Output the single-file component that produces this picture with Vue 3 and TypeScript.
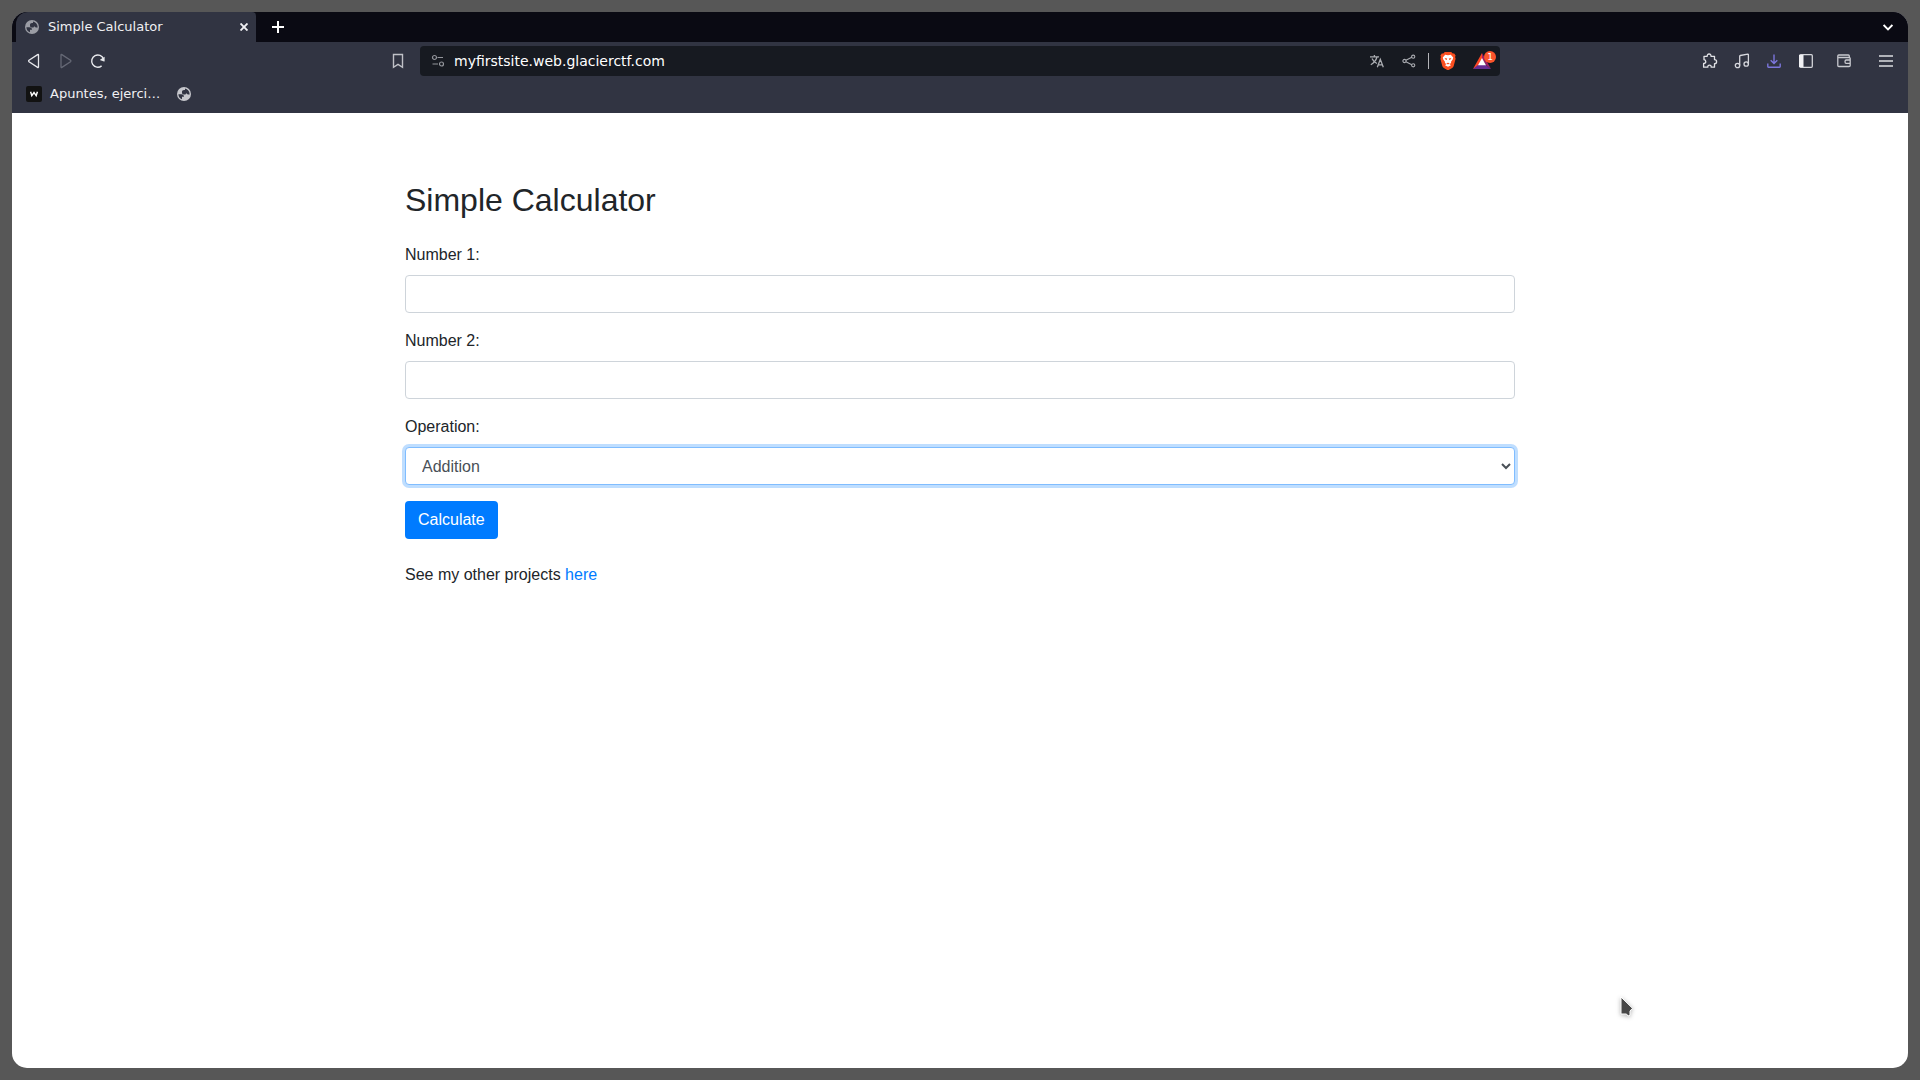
<script setup lang="ts">
import { ref } from 'vue'

const pageTitle = 'Simple Calculator'
const address = ref('myfirstsite.web.glacierctf.com')
const first = ref('')
const second = ref('')
const operation = ref('Addition')
const operations: string[] = ['Addition', 'Subtraction', 'Multiplication', 'Division']
const land =
  'M1.400 7.200h2.800c1.900 0 2.800.9 2.800 2.600H5v2.500C2.900 11.600 1.400 9.700 1.400 7.200zM5 5.500V4.800C5 3.700 5.800 3 7 3h1V1.500c2.700.5 4.600 2.700 4.600 5.500v.6h-1.200c-.7 0-1.300-.4-1.500-1C9 6.600 8.600 7 8.600 7.500H6.500c-.9 0-1.500-.8-1.500-2z'
</script>

<template>
  <div class="window">
    <header class="chrome">
      <div class="tabs">
        <div class="tab">
          <svg viewBox="0 0 14 14" width="14" height="14"><circle cx="7" cy="7" r="7" fill="#9b9da5" /><path :d="land" fill="#313442" /></svg>
          <span class="tab-title">{{ pageTitle }}</span>
          <button class="close" aria-label="Close tab">
            <svg viewBox="0 0 8 8" width="8" height="8"><path d="M.5.5l7 7M7.500.5l-7 7" stroke="#f1f1f4" stroke-width="1.900" /></svg>
          </button>
        </div>
        <button class="strip-btn" aria-label="New tab">
          <svg viewBox="0 0 12 12" width="12" height="12"><path d="M6 0v12M0 6h12" stroke="#fff" stroke-width="2" /></svg>
        </button>
        <button class="strip-btn search-tabs" aria-label="Search tabs">
          <svg viewBox="0 0 10 7" width="10" height="7"><path d="M.6 1L5 5.400 9.400 1" fill="none" stroke="#fff" stroke-width="1.900" /></svg>
        </button>
      </div>

      <div class="toolbar">
        <div class="nav">
          <button class="tool" aria-label="Back">
            <svg viewBox="0 0 14 16" width="14" height="16"><path d="M11.500 1.900v12.200q-.2.700-.9.300L2 8.700q-.8-.7 0-1.400l8.600-5.700q.7-.4.9.3z" fill="none" stroke="#e6e7eb" stroke-width="1.300" /></svg>
          </button>
          <button class="tool" aria-label="Forward" disabled>
            <svg viewBox="0 0 14 16" width="14" height="16"><path d="M2 1.900v12.200q.2.700.9.300L11.500 8.700q.8-.7 0-1.400L2.900 1.600q-.7-.4-.9.3z" fill="none" stroke="#656875" stroke-width="1.300" /></svg>
          </button>
          <button class="tool" aria-label="Reload">
            <svg viewBox="0 0 16 16" width="16" height="16"><path d="M11.600 12.900A6.100 6.100 0 1 1 13.500 6" fill="none" stroke="#e6e7eb" stroke-width="1.400" /><path d="M14.600 3.800v4.100q0 .6-.6.500l-3.600-1.100q-.6-.3-.1-.8z" fill="#e6e7eb" /></svg>
          </button>
          <button class="tool bookmark" aria-label="Bookmark this page">
            <svg viewBox="0 0 12 16" width="12" height="16"><path d="M1.500 1.500h9v12.800L6 11.400l-4.500 2.900z" fill="none" stroke="#c0c1c7" stroke-width="1.400" /></svg>
          </button>
        </div>

        <div class="address">
          <svg viewBox="0 0 14 14" width="14" height="14" fill="none" stroke="#93959b" stroke-width="1.200"><circle cx="3.500" cy="3.500" r="2" /><circle cx="10.500" cy="10" r="2" /><path d="M6.500 3.500H12M1.500 10H7" /></svg>
          <input v-model="address" aria-label="Address" spellcheck="false" />
          <button class="tool" aria-label="Translate">
            <svg viewBox="0 0 16 16" width="16" height="16" fill="none" stroke="#aaacb1" stroke-width="1.300"><path d="M1 3.800h9M5.400 2v1.800M1.800 11.800Q6.500 9 8 4M3 5.500q1.500 3.500 5 5M8.300 14.300l3-8 3 8M9.400 11.800h4" /></svg>
          </button>
          <button class="tool" aria-label="Share">
            <svg viewBox="0 0 14 14" width="14" height="14" fill="none" stroke="#aaacb1" stroke-width="1.100"><path d="M3.900 6.300l5.900-3M3.900 7.700l5.900 3" /><circle cx="2.500" cy="7" r="1.600" /><circle cx="11.200" cy="2.700" r="1.600" /><circle cx="11.200" cy="11.300" r="1.600" /></svg>
          </button>
          <span class="divider"></span>
          <button class="tool" aria-label="Brave Shields">
            <svg viewBox="0 0 16 18" width="16" height="18"><path d="M4.800 0h6.400l1.500 1.500 1.500-.1 1.400 2-.5 1.500.5 1.800-1.900 7.300q-.3 1.200-1.500 2L8.700 18H7.300l-3.500-2q-1.200-.8-1.500-2L.4 6.700l.5-1.800L.4 3.400l1.400-2 1.500.1z" fill="#fb4f20" /><path d="M5.200 2.800L8 3.300l2.800-.5 2.400 2.700-.5 1.900-1.800 2.500.3 1.200-1.700.9 1.500 1.200L8 14.800l-3-1.600L6.500 12l-1.700-.9.300-1.200-1.800-2.500-.5-1.900z" fill="#fff" /><path d="M4.600 6l2.600.6-.4 1.500-1.300-.5zM11.400 6l-2.600.6.4 1.500 1.300-.5zM6.300 11.300L8 10.700l1.700.6L8 12.400z" fill="#fb4f20" /></svg>
          </button>
          <button class="tool rewards" aria-label="Brave Rewards">
            <svg viewBox="0 0 18 16" width="18" height="16"><path d="M9 0L0 16l9-5.500z" fill="#ff4724" /><path d="M9 0v5.500L13 12l5 4z" fill="#9e1f63" /><path d="M0 16l5-4h8l5 4z" fill="#662d91" /><path d="M9 5l4 7.200H5z" fill="#fff" /></svg>
            <span class="badge">1</span>
          </button>
        </div>

        <div class="actions">
          <button class="tool" aria-label="Extensions">
            <svg viewBox="0 0 16 16" width="16" height="16"><path d="M2 3.300h3.200q-.1-2.300 1.900-2.300T9 3.300h3.500v3.400q2.100 0 2.100 2t-2.100 2v3.500H9.200q.1-2.100-1.700-2.100t-1.700 2.100H1.600v-3.700q2.200 0 2.200-1.800T2 6.700z" fill="none" stroke="#e0e1e5" stroke-width="1.300" stroke-linejoin="round" /></svg>
          </button>
          <button class="tool" aria-label="Media">
            <svg viewBox="0 0 16 16" width="16" height="16" fill="none" stroke="#d5d6dc" stroke-width="1.300"><path d="M5.700 12.600V3.200q0-.6.600-.7l7.400-1.300q.7-.1.700.6v9.100" /><circle cx="3.500" cy="12.500" r="2.200" /><circle cx="12.200" cy="11" r="2.200" /></svg>
          </button>
          <button class="tool" aria-label="Downloads">
            <svg viewBox="0 0 14 14" width="14" height="14" fill="none" stroke="#7c76dc" stroke-width="1.400"><path d="M7 .5v8.800M3.700 6.200L7 9.500l3.300-3.300M.8 9.500v3q0 .7.700.7h11q.7 0 .7-.7v-3" /></svg>
          </button>
          <button class="tool" aria-label="Sidebar">
            <svg viewBox="0 0 14 14" width="14" height="14"><rect x=".7" y=".7" width="12.600" height="12.600" rx="1" fill="none" stroke="#d4d5da" stroke-width="1.300" /><path d="M0 1h4.500v12H0z" fill="#f0f0f3" /></svg>
          </button>
          <button class="tool wallet" aria-label="Wallet">
            <svg viewBox="0 0 14 14" width="14" height="14" fill="none" stroke="#c8c9cf" stroke-width="1.300"><path d="M12.300 3.500V2q0-1-1-1H1.800q-1 0-1 1v9.500q0 1 1 1H12q1.200 0 1.200-1v-7q0-1-1.200-1H1.500M13.500 6H9.200q-1.200 0-1.200 1.700t1.200 1.700h4.300" /></svg>
          </button>
          <button class="tool menu" aria-label="Menu">
            <svg viewBox="0 0 14 12" width="14" height="12"><path d="M0 1h14M0 6h14M0 11h14" stroke="#dcdde1" stroke-width="1.300" /></svg>
          </button>
        </div>
      </div>

      <nav class="bookmarks">
        <a href="#" class="mark">
          <svg viewBox="0 0 16 16" width="16" height="16"><rect width="16" height="16" rx="2" fill="#121212" /><path d="M4.600 5.700l1.200 4L8 6.500l2.200 3.200 1.200-4" fill="none" stroke="#fff" stroke-width="1.400" /></svg>
          <span>Apuntes, ejerci…</span>
        </a>
        <a href="#" class="mark" aria-label="Saved page">
          <svg viewBox="0 0 14 14" width="14" height="14"><circle cx="7" cy="7" r="7" fill="#c6c7cc" /><path :d="land" fill="#313442" /></svg>
        </a>
      </nav>
    </header>

    <main class="container">
      <h2>{{ pageTitle }}</h2>
      <form @submit.prevent>
        <div class="field">
          <label for="num1">Number 1:</label>
          <input id="num1" v-model="first" class="control" type="text" />
        </div>
        <div class="field">
          <label for="num2">Number 2:</label>
          <input id="num2" v-model="second" class="control" type="text" />
        </div>
        <div class="field">
          <label for="operation">Operation:</label>
          <select id="operation" v-model="operation" class="control focused">
            <option v-for="name in operations" :key="name">{{ name }}</option>
          </select>
        </div>
        <button class="submit" type="submit">Calculate</button>
      </form>
      <p>See my other projects <a href="#">here</a></p>
    </main>
  </div>

  <svg class="pointer" viewBox="0 0 16 24" width="16" height="24"><path d="M2 2v17h5.500l1.500 2 2-.8v-4.200l2.500-2.700z" fill="#484848" stroke="#fff" stroke-width="1" /></svg>
</template>

<style>
body {
  margin: 0;
  background: #575757;
}
</style>

<style scoped>
* {
  box-sizing: border-box;
}

button {
  font: inherit;
  border: 0;
  padding: 0;
  background: none;
  cursor: default;
}

svg {
  display: block;
  flex: none;
}

.window {
  margin: 12px;
  min-height: calc(100vh - 24px);
  border-radius: 15px;
  overflow: hidden;
  background: #fff;
}

.chrome {
  background: #313442;
  color: #f0f0f3;
  font: 13px/18px "DejaVu Sans", sans-serif;
}

.tabs {
  display: flex;
  align-items: center;
  height: 30px;
  padding: 0 4px;
  background: #0a0a13;
}

.tab {
  display: flex;
  align-items: center;
  width: 240px;
  height: 30px;
  padding: 0 7px 0 9px;
  border-radius: 12px 4px 0 0;
  background: #313442;
}

.tab-title {
  flex: 1;
  margin-left: 9px;
  white-space: nowrap;
}

.close {
  padding: 1px;
}

.strip-btn {
  display: flex;
  align-items: center;
  justify-content: center;
  width: 32px;
  height: 30px;
  margin-left: 6px;
}

.search-tabs {
  margin-left: auto;
}

.toolbar {
  display: grid;
  grid-template-columns: 1fr minmax(0, 1080px) 1fr;
  align-items: center;
  height: 38px;
  padding: 0 6px;
}

.nav,
.actions {
  display: flex;
}

.actions {
  justify-content: flex-end;
}

.tool {
  display: flex;
  flex: none;
  align-items: center;
  justify-content: center;
  width: 32px;
  height: 30px;
}

.bookmark {
  margin: 0 6px 0 auto;
}

.address {
  display: flex;
  align-items: center;
  height: 30px;
  padding: 0 2px 0 11px;
  border-radius: 4px;
  background: #171a21;
}

.address input {
  flex: 1;
  min-width: 0;
  height: 30px;
  margin-left: 9px;
  padding: 0;
  border: 0;
  outline: 0;
  background: none;
  color: #fff;
  font: 14px/18px "DejaVu Sans", sans-serif;
}

.divider {
  width: 1px;
  height: 16px;
  margin: 0 3px;
  background: #b4b5b9;
}

.rewards {
  position: relative;
  margin-left: 2px;
}

.badge {
  position: absolute;
  top: 5px;
  right: 2px;
  width: 12px;
  height: 12px;
  border-radius: 6px;
  background: #fb542b;
  color: #fff;
  font-size: 9px;
  line-height: 12px;
  text-align: center;
}

.wallet {
  margin-left: 6px;
}

.menu {
  margin-left: 10px;
}

.bookmarks {
  display: flex;
  align-items: center;
  gap: 17px;
  height: 33px;
  padding: 0 14px 5px;
}

.mark {
  display: flex;
  align-items: center;
  gap: 8px;
  color: inherit;
  text-decoration: none;
}

.container {
  max-width: 1140px;
  margin: 0 auto;
  padding: 68px 15px 32px;
  color: #212529;
  font: 16px/24px "Liberation Sans", Arial, sans-serif;
}

h2 {
  margin: 0 0 24px;
  font-size: 32px;
  font-weight: 400;
  line-height: 38px;
}

.field {
  margin-bottom: 16px;
}

label {
  display: block;
  width: fit-content;
  margin-bottom: 8px;
}

.control {
  display: block;
  width: 100%;
  height: 38px;
  padding: 6px 12px;
  border: 1px solid #ced4da;
  border-radius: 4px;
  outline: 0;
  background: #fff;
  color: #495057;
  font: inherit;
}

.focused,
.control:focus {
  border-color: #80bdff;
  box-shadow: 0 0 0 3px rgba(0, 123, 255, 0.25);
}

.submit {
  height: 38px;
  padding: 0 13px;
  border-radius: 4px;
  background: #007bff;
  color: #fff;
}

p {
  margin: 24px 0 0;
}

p a {
  color: #007bff;
  text-decoration: none;
}

.pointer {
  position: absolute;
  top: 995px;
  left: 1619px;
  filter: drop-shadow(0 1px 2px rgba(0, 0, 0, 0.3));
}
</style>
